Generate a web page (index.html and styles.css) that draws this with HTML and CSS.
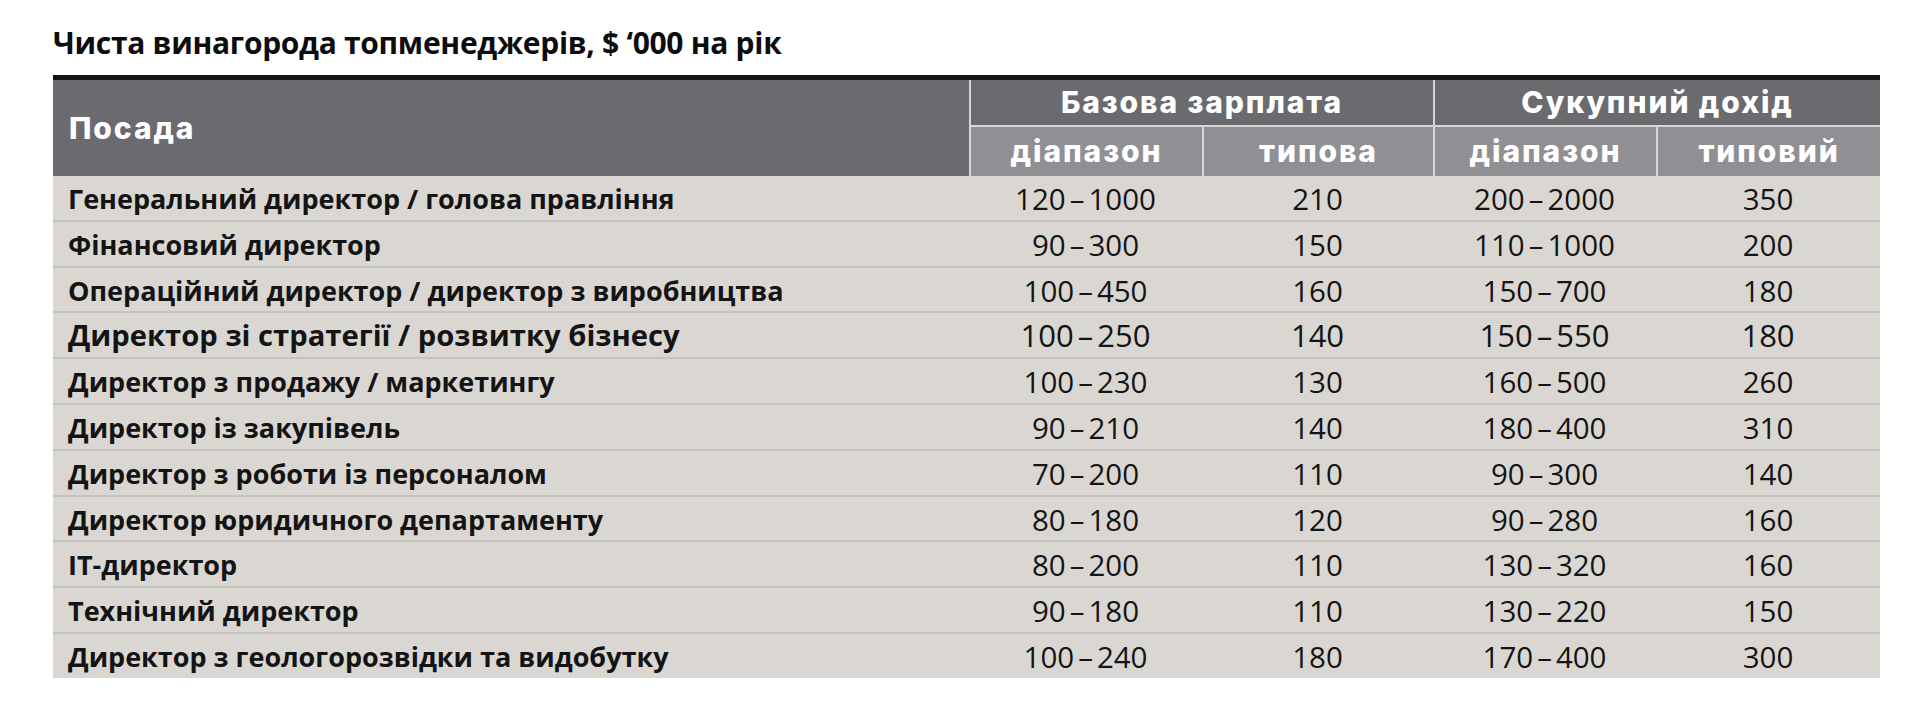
FILE: index.html
```html
<!DOCTYPE html>
<html lang="uk">
<head>
<meta charset="utf-8">
<title>Чиста винагорода топменеджерів</title>
<link rel="stylesheet" href="styles.css">
</head>
<body>
<div class="page">
  <h1 class="title">Чиста винагорода топменеджерів, $ ‘000 на рік</h1>
  <table class="pay">
    <colgroup>
      <col class="c-pos"><col class="c-a"><col class="c-b"><col class="c-c"><col class="c-d">
    </colgroup>
    <thead>
      <tr class="h1">
        <th class="pos" rowspan="2">Посада</th>
        <th class="grp" colspan="2">Базова зарплата</th>
        <th class="grp" colspan="2">Сукупний дохід</th>
      </tr>
      <tr class="h2">
        <th class="sub">діапазон</th>
        <th class="sub">типова</th>
        <th class="sub">діапазон</th>
        <th class="sub">типовий</th>
      </tr>
    </thead>
    <tbody>
      <tr><td class="lbl">Генеральний директор / голова правління</td><td>120<span class="d">–</span>1000</td><td>210</td><td>200<span class="d">–</span>2000</td><td>350</td></tr>
      <tr><td class="lbl">Фінансовий директор</td><td>90<span class="d">–</span>300</td><td>150</td><td>110<span class="d">–</span>1000</td><td>200</td></tr>
      <tr><td class="lbl">Операційний директор / директор з виробництва</td><td>100<span class="d">–</span>450</td><td>160</td><td>150<span class="d">–</span>700</td><td>180</td></tr>
      <tr class="big"><td class="lbl">Директор зі стратегії / розвитку бізнесу</td><td>100<span class="d">–</span>250</td><td>140</td><td>150<span class="d">–</span>550</td><td>180</td></tr>
      <tr><td class="lbl">Директор з продажу / маркетингу</td><td>100<span class="d">–</span>230</td><td>130</td><td>160<span class="d">–</span>500</td><td>260</td></tr>
      <tr><td class="lbl">Директор із закупівель</td><td>90<span class="d">–</span>210</td><td>140</td><td>180<span class="d">–</span>400</td><td>310</td></tr>
      <tr><td class="lbl">Директор з роботи із персоналом</td><td>70<span class="d">–</span>200</td><td>110</td><td>90<span class="d">–</span>300</td><td>140</td></tr>
      <tr><td class="lbl">Директор юридичного департаменту</td><td>80<span class="d">–</span>180</td><td>120</td><td>90<span class="d">–</span>280</td><td>160</td></tr>
      <tr><td class="lbl">IT-директор</td><td>80<span class="d">–</span>200</td><td>110</td><td>130<span class="d">–</span>320</td><td>160</td></tr>
      <tr><td class="lbl">Технічний директор</td><td>90<span class="d">–</span>180</td><td>110</td><td>130<span class="d">–</span>220</td><td>150</td></tr>
      <tr class="last"><td class="lbl">Директор з геологорозвідки та видобутку</td><td>100<span class="d">–</span>240</td><td>180</td><td>170<span class="d">–</span>400</td><td>300</td></tr>
    </tbody>
  </table>
</div>
</body>
</html>
```
FILE: styles.css
```css
html, body {
  margin: 0;
  padding: 0;
  background: #ffffff;
}

.page {
  padding: 23px 40px 0 53px;
  font-family: "Open Sans", "Liberation Sans", sans-serif;
  color: #111111;
}

.title {
  margin: 0 0 12px;
  font-size: 30px;
  line-height: 40px;
  font-weight: 700;
  letter-spacing: -0.3px;
  color: #0d0d0d;
}

.pay {
  width: 1827px;
  table-layout: fixed;
  border-collapse: separate;
  border-spacing: 0;
  border-top: 5px solid #141414;
}

.c-pos { width: 916px; }
.c-a { width: 233px; }
.c-b { width: 231px; }
.c-c { width: 223px; }
.c-d { width: 224px; }

.pay th {
  padding: 0;
  color: #ffffff;
  font-family: "Inter", "Lato", sans-serif;
  font-weight: 800;
  font-size: 30px;
  letter-spacing: 1.9px;
}

.pay .pos {
  background: #6a6a6f;
  text-align: left;
  padding-left: 16px;
  vertical-align: middle;
}

.pay .grp {
  background: #6a6a6f;
  height: 45px;
  line-height: 45px;
  border-left: 2px solid #d6d6d8;
  border-bottom: 2px solid #d6d6d8;
}

.pay .sub {
  background: #8f8f94;
  height: 49px;
  line-height: 49px;
  border-left: 2px solid #d6d6d8;
}

.pay td {
  background: #dad7d3;
  padding: 2px 0 0;
  height: 41.8px;
  line-height: 41.8px;
  text-align: center;
  font-size: 29.5px;
  font-weight: 400;
  color: #141414;
  border-bottom: 2px solid #c5c3bf;
  white-space: nowrap;
}

.pay tr.last td {
  height: 42px;
  line-height: 42px;
  border-bottom: 0;
}

.pay td.lbl {
  text-align: left;
  padding-left: 15px;
  font-size: 27px;
  font-weight: 700;
}

.pay tr.big td {
  font-size: 31px;
}

.pay tr.big td.lbl {
  font-size: 29.2px;
}

.d {
  margin: 0 4px;
}
```
